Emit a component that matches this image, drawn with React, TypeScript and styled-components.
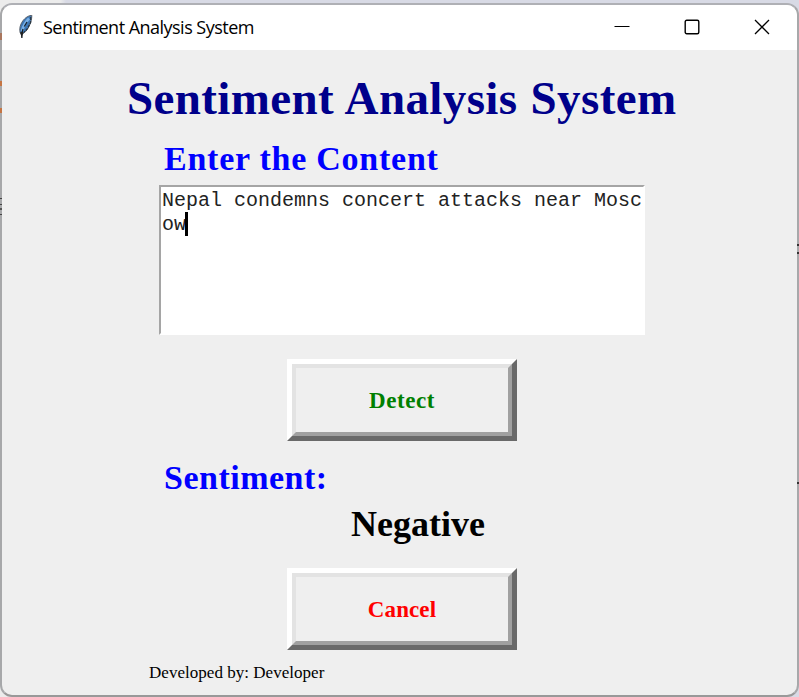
import React from "react";
import styled, { createGlobalStyle } from "styled-components";

const GlobalStyle = createGlobalStyle`
  * { box-sizing: border-box; }
  body { margin: 0; background: #e3e4e8; overflow: hidden; }
`;

const Desktop = styled.div`
  width: 799px;
  height: 697px;
  padding-top: 3px;
  background: linear-gradient(90deg, #ececec 0 60px, #d8dae5 66px 100%);
`;

const Window = styled.main`
  position: relative;
  height: 694px;
  display: flex;
  flex-direction: column;
  overflow: hidden;
  border: 2px solid #a7a8aa;
  border-top-color: #afb0b5;
  border-bottom-color: #999;
  border-radius: 12px;
  background: #efefef;
`;

const TitleBar = styled.header`
  height: 45px;
  flex: none;
  display: flex;
  align-items: center;
  padding-left: 14px;
  background: #fff;
`;

const Caption = styled.span`
  margin: -1px 0 0 7px;
  flex: 1;
  color: #000;
  font: 18px/24px "Open Sans", sans-serif;
  letter-spacing: -0.52px;
  white-space: nowrap;
`;

const Controls = styled.div`
  display: flex;
`;

const ControlButton = styled.button`
  width: 70px;
  height: 45px;
  padding: 0 0 2px;
  border: 0;
  display: grid;
  place-items: center;
  background: transparent;
`;

const Content = styled.section`
  display: flex;
  flex-direction: column;
  font-family: "Liberation Serif", serif;
`;

const Title = styled.h1`
  margin: 20px 0 0 125px;
  height: 56px;
  color: #00008b;
  font-size: 47px;
  line-height: 56px;
  letter-spacing: 0.38px;
  word-spacing: 1px;
  white-space: nowrap;
`;

const Label = styled.h2<{ $gap: number; $spacing: number }>`
  margin: ${(p) => p.$gap}px 0 0 162px;
  height: 40px;
  color: #0000ff;
  font-size: 34px;
  line-height: 38px;
  letter-spacing: ${(p) => p.$spacing}px;
  white-space: nowrap;
`;

const Editor = styled.div`
  width: 486px;
  height: 150px;
  margin: 5px 0 0 157px;
  padding: 1px 0 0 1px;
  border: 2px solid;
  border-color: #a5a5a5 #fff #fff #a5a5a5;
  background: #fff;
  color: #222;
  font: 20px/26px "Liberation Mono", monospace;
  overflow: hidden;
`;

const Line = styled.div`
  height: 24px;
  display: flex;
  white-space: pre;
`;

const Caret = styled.span`
  width: 3px;
  height: 24px;
  margin-left: -1px;
  background: #000;
`;

const PushButton = styled.button<{ $color: string; $gap: number; $spacing: number }>`
  width: 230px;
  height: 82px;
  margin: ${(p) => p.$gap}px 0 0 285px;
  padding: 0;
  border: 5px solid;
  border-color: #fff #696969 #696969 #fff;
  background: #efefef;
  color: ${(p) => p.$color};
  font: bold 23px/26px "Liberation Serif", serif;
  letter-spacing: ${(p) => p.$spacing}px;
`;

const Face = styled.span`
  width: 100%;
  height: 100%;
  display: flex;
  align-items: center;
  justify-content: center;
  padding-top: 2px;
  border: 4px solid;
  border-color: #e3e3e3 #a0a0a0 #a0a0a0 #e3e3e3;
`;

const Result = styled.output`
  height: 40px;
  margin: 5px 0 0 349px;
  color: #000;
  font-size: 36px;
  font-weight: bold;
  line-height: 40px;
`;

const Credit = styled.footer`
  height: 20px;
  margin: 13px 0 0 147px;
  color: #000;
  font-size: 17px;
  line-height: 20px;
  letter-spacing: 0.03px;
  white-space: nowrap;
`;

const EdgeMark = styled.i<{ $side: "left" | "right"; $top: number; $height: number; $color: string }>`
  position: absolute;
  ${(p) => p.$side}: 0;
  top: ${(p) => p.$top}px;
  width: 2px;
  height: ${(p) => p.$height}px;
  background: ${(p) => p.$color};
`;

const edgeMarks = [
  { side: "left", top: 30, height: 7, color: "#a9765d" },
  { side: "left", top: 78, height: 5, color: "#c57543" },
  { side: "left", top: 105, height: 5, color: "#c57543" },
  { side: "left", top: 195, height: 1, color: "#444" },
  { side: "left", top: 201, height: 1, color: "#444" },
  { side: "left", top: 205, height: 2, color: "#555" },
  { side: "left", top: 211, height: 1, color: "#444" },
  { side: "right", top: 241, height: 2, color: "#333" },
  { side: "right", top: 249, height: 2, color: "#333" },
  { side: "right", top: 479, height: 2, color: "#333" },
] as const;

const Frame = styled.div`
  position: relative;
  width: 799px;
  height: 694px;
`;

const EdgeLayer = styled.div`
  position: absolute;
  inset: 0;
  pointer-events: none;
`;

const Feather = () => (
  <svg width="20" height="26" viewBox="0 0 20 26">
    <g transform="translate(1 -1)">
      <path d="M14.800 1.200C9.500 1.800 4.600 6.800 3.200 12.300c-.7 2.800-.6 6 .8 8.300 3.500-1.300 6-4.100 7.800-7.600C13.600 9.500 14.900 5 14.800 1.200Z" fill="#3d77b6" stroke="#59616a" strokeWidth="1" />
      <path d="M12 4.500C8.500 8 6.300 12 5 17" fill="none" stroke="#78afe5" strokeWidth="2.600" />
      <path d="M13.700 3v5.500l-2 3.500-1.500 3-3 3" fill="none" stroke="#26323d" strokeWidth="1.100" strokeDasharray="3 1" />
      <path d="M10 8 7.300 12.500M6 15 4.600 20.500 4.900 24" fill="none" stroke="#17202a" strokeWidth="1.300" />
      <path d="m3.200 18 1.700 6 1.700-6" fill="#222" />
    </g>
  </svg>
);

export default function App() {
  return (
    <>
      <GlobalStyle />
      <Desktop>
        <Frame>
          <Window>
            <TitleBar>
              <Feather />
              <Caption>Sentiment Analysis System</Caption>
              <Controls>
                <ControlButton aria-label="Minimize">
                  <svg width="16" height="16"><path d="M.5 7.500h15" stroke="#000" /></svg>
                </ControlButton>
                <ControlButton aria-label="Maximize">
                  <svg width="16" height="16"><rect x="1.200" y="1.200" width="13.600" height="13.600" rx="1.500" fill="none" stroke="#000" strokeWidth="1.400" /></svg>
                </ControlButton>
                <ControlButton aria-label="Close">
                  <svg width="16" height="16"><path d="m1 1 14 14M15 1 1 15" stroke="#000" strokeWidth="1.300" /></svg>
                </ControlButton>
              </Controls>
            </TitleBar>
            <Content>
              <Title>Sentiment Analysis System</Title>
              <Label $gap={14} $spacing={0.75}>Enter the Content</Label>
              <Editor>
                <Line>Nepal condemns concert attacks near Mosc</Line>
                <Line>ow<Caret /></Line>
              </Editor>
              <PushButton $color="#008000" $gap={24} $spacing={0.6}><Face>Detect</Face></PushButton>
              <Label $gap={18} $spacing={0.5}>Sentiment:</Label>
              <Result>Negative</Result>
              <PushButton $color="#ff0000" $gap={24} $spacing={0.1}><Face>Cancel</Face></PushButton>
              <Credit>Developed by: Developer</Credit>
            </Content>
          </Window>
          <EdgeLayer>
            {edgeMarks.map((m) => (
              <EdgeMark key={`${m.side}${m.top}`} $side={m.side} $top={m.top} $height={m.height} $color={m.color} />
            ))}
          </EdgeLayer>
        </Frame>
      </Desktop>
    </>
  );
}
